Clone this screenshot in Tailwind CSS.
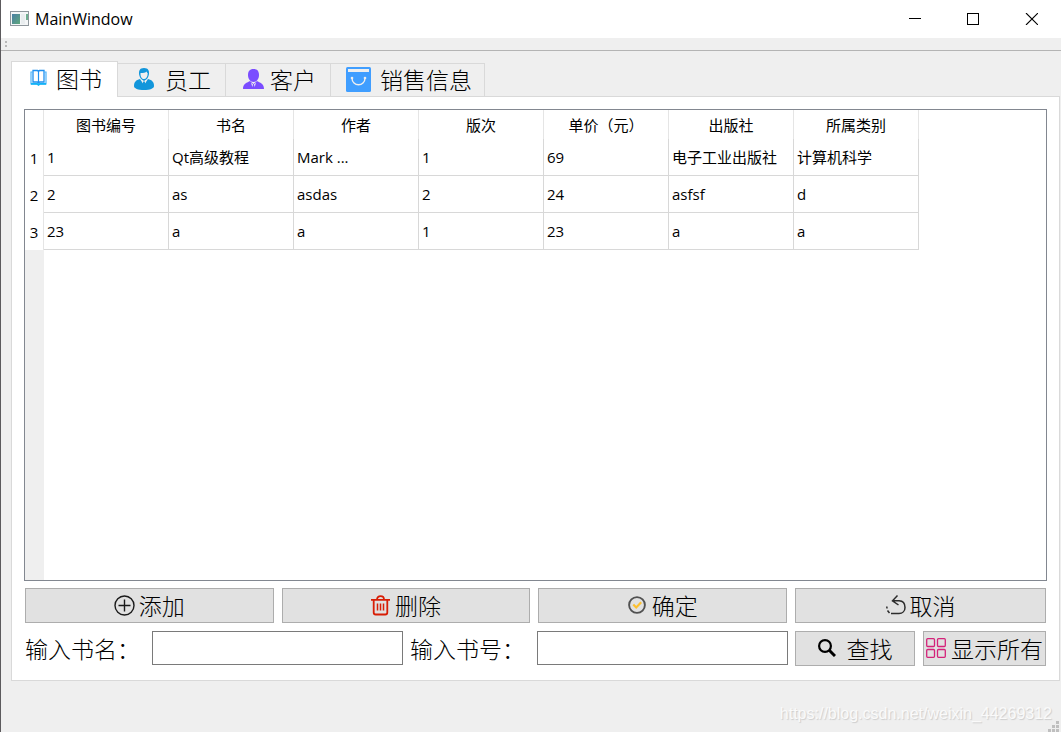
<!DOCTYPE html>
<html lang="zh-CN">
<head>
    <meta charset="UTF-8">
    <meta name="viewport" content="width=device-width, initial-scale=1.0">
    <title>MainWindow</title>
    <script src="https://cdn.jsdelivr.net/npm/@tailwindcss/browser@4"></script>
</head>
<body class="h-screen flex flex-col bg-[#efefef] border-l border-[#5c5a5d] text-black font-['Open_Sans','Noto_Sans_CJK_SC',sans-serif] overflow-hidden">
    <!-- Title bar -->
    <header class="flex items-center h-[38px] shrink-0 bg-white pl-[9px] pb-px">
        <svg class="w-5 h-4" viewBox="0 0 20 16">
            <defs>
                <linearGradient id="app" x1="0" y1="0" x2="1" y2="1">
                    <stop offset="0" stop-color="#4a7fa5"/>
                    <stop offset="1" stop-color="#5fa87c"/>
                </linearGradient>
            </defs>
            <rect x="0.5" y="0.5" width="18" height="14" fill="#f4f6f7" stroke="#8f979d"/>
            <rect x="2" y="3" width="8" height="10" fill="url(#app)"/>
            <rect x="11" y="3" width="4" height="10" fill="#e9edef"/>
            <rect x="16" y="3" width="2" height="6" fill="#6fae90"/>
        </svg>
        <h1 class="ml-[5px] text-base leading-6">MainWindow</h1>
        <div class="ml-auto flex">
            <button class="w-[58px] h-9 flex items-center justify-center" aria-label="Minimize">
                <svg class="w-3 h-3" viewBox="0 0 12 12" shape-rendering="crispEdges"><path d="M0 5.5h12" stroke="#000"/></svg>
            </button>
            <button class="w-[58px] h-9 flex items-center justify-center" aria-label="Maximize">
                <svg class="w-3 h-3" viewBox="0 0 12 12" shape-rendering="crispEdges"><rect x="0.5" y="0.5" width="11" height="11" fill="none" stroke="#000"/></svg>
            </button>
            <button class="w-[59px] h-9 flex items-center justify-center" aria-label="Close">
                <svg class="w-[13px] h-3" viewBox="0 0 13 12"><path d="M1 0l12 12M13 0L1 12" stroke="#000" stroke-width="1.1"/></svg>
            </button>
        </div>
    </header>

    <!-- Empty toolbar with drag handle -->
    <div class="h-[13px] shrink-0 border-b border-[#b4b4b4] pl-1 pt-[3px]">
        <svg class="w-1 h-2" viewBox="0 0 4 8"><path d="M0 0h2v2h-2zM0 4h2v2h-2z" fill="#b8b8b8"/></svg>
    </div>

    <main class="flex-1 min-h-0 flex flex-col pl-[10px] pr-px pt-[10px]">
        <nav class="relative z-10 flex items-end h-9 -mb-px text-[23px] leading-8 font-light font-['Noto_Sans_CJK_SC',sans-serif]" role="tablist">
            <button role="tab" aria-selected="true" class="flex items-center w-[107px] h-9 pl-[18px] pb-1 bg-white border border-b-0 border-[#d9d9d9] font-light">
                <svg class="w-[17px] h-[17px] mr-[9px]" viewBox="0 0 17 17" fill="none">
                    <path d="M3 1.500H7.500L8.500 2.500L9.500 1.500H14V13H9.500L8.500 14L7.500 13H3Z" stroke="#1e90f0" stroke-width="1.300"/>
                    <path d="M8.500 2.500V14" stroke="#1e90f0" stroke-width="1.200"/>
                    <path d="M3 3H1V15H16V3H14" stroke="#4db4fa" stroke-width="1.200"/>
                    <path d="M1 14.800H7L8.500 15.800L10 14.800H16" stroke="#10b4f6" stroke-width="1.800"/>
                </svg>
                图书
            </button>
            <button role="tab" aria-selected="false" class="flex items-center w-[108px] h-[34px] pl-4 pb-0.5 border border-l-0 border-[#d9d9d9] font-light">
                <svg class="w-5 h-[22px] mr-[11px]" viewBox="0 0 20 22">
                    <path d="M10 0C5.500 0 4.800 3 5 6C5.400 9 7 11 8 12L10 14L12 12C13 11 14.600 9 15 6C15.200 3 14.500 0 10 0Z" fill="#1296db"/>
                    <path d="M6.500 5C9 5 12 4.500 12.500 3.500C13 4.500 13.500 5 13.700 5C13.700 9 12 11 10 11C8 11 6.300 9 6.500 5Z" fill="#efefef"/>
                    <path d="M6 11C2 12 0 14 0 18C0 20.500 4 22 10 22C16 22 20 20.500 20 18C20 14 18 12 14 11L10 17Z" fill="#1296db"/>
                    <path d="M7 11L10 17L13 11L10 13Z" fill="#efefef"/>
                    <path d="M9.200 13.500h1.600l.6 3L10 18L8.600 16.500Z" fill="#1296db"/>
                </svg>
                员工
            </button>
            <button role="tab" aria-selected="false" class="flex items-center w-[105px] h-[34px] pl-[17px] pb-0.5 border border-l-0 border-[#d9d9d9] font-light">
                <svg class="w-[21px] h-5 mr-[6px]" viewBox="0 0 21 20" fill="#7b4dff">
                    <path d="M10.500 0C6.500 0 5 2.500 5 6C5 9.500 7 13 10.500 13C14 13 16 9.500 16 6C16 2.500 14.500 0 10.500 0Z"/>
                    <path d="M7 12C3 14 0 15 0 20H21C21 15 18 14 14 12L10.500 15Z"/>
                    <path d="M8 13.500L9.300 18L10 15.500L8.800 14.300ZM13 13.500L11.700 18L11 15.500L12.200 14.300Z" fill="#efefef"/>
                </svg>
                客户
            </button>
            <button role="tab" aria-selected="false" class="flex items-center w-[154px] h-[34px] pl-[15px] pb-0.5 border border-l-0 border-[#d9d9d9] font-light">
                <svg class="w-[25px] h-[25px] mr-[9px] shrink-0" viewBox="0 0 25 25">
                    <rect width="25" height="25" rx="1.500" fill="#409eff"/>
                    <path d="M2 2H23V5H2Z" fill="#efefef"/>
                    <path d="M6 11C6 20 19 20 19 11" fill="none" stroke="#efefef" stroke-width="1.400"/>
                    <circle cx="6" cy="11" r="1.300" fill="#efefef"/>
                    <circle cx="19" cy="11" r="1.300" fill="#efefef"/>
                </svg>
                销售信息
            </button>
        </nav>

        <section class="flex-1 min-h-0 flex flex-col bg-white border border-[#d9d9d9] px-3 pt-3 pb-[14px]">
            <div class="flex-1 min-h-0 flex flex-col border border-[#828790]">
                <table class="table-fixed w-[894px] border-separate border-spacing-0 text-[15px] leading-5 text-left">
                    <colgroup>
                        <col class="w-[19px]">
                        <col span="7">
                    </colgroup>
                    <thead>
                        <tr class="h-[29px] *:p-0 *:pt-px *:font-normal *:text-center *:border-r *:border-[#e5e5e5]">
                            <th></th>
                            <th scope="col">图书编号</th>
                            <th scope="col">书名</th>
                            <th scope="col">作者</th>
                            <th scope="col">版次</th>
                            <th scope="col">单价（元）</th>
                            <th scope="col">出版社</th>
                            <th scope="col">所属类别</th>
                        </tr>
                    </thead>
                    <tbody class="[&_td]:border-r [&_td]:border-b [&_td]:border-[#d8d8d8] [&_td]:px-[3px] [&_td]:py-0 [&_th]:p-0 [&_th]:font-normal [&_th]:text-center [&_th]:border-r [&_th]:border-[#e5e5e5]">
                        <tr class="h-[37px]">
                            <th scope="row">1</th>
                            <td>1</td>
                            <td>Qt高级教程</td>
                            <td>Mark ...</td>
                            <td>1</td>
                            <td>69</td>
                            <td>电子工业出版社</td>
                            <td>计算机科学</td>
                        </tr>
                        <tr class="h-[37px]">
                            <th scope="row">2</th>
                            <td>2</td>
                            <td>as</td>
                            <td>asdas</td>
                            <td>2</td>
                            <td>24</td>
                            <td>asfsf</td>
                            <td>d</td>
                        </tr>
                        <tr class="h-[37px]">
                            <th scope="row">3</th>
                            <td>23</td>
                            <td>a</td>
                            <td>a</td>
                            <td>1</td>
                            <td>23</td>
                            <td>a</td>
                            <td>a</td>
                        </tr>
                    </tbody>
                </table>
                <div class="flex-1 w-[19px] bg-[#efefef]"></div>
            </div>

            <div class="mt-[7px] px-px grid grid-cols-[1fr_1fr_1fr_251px] gap-2 text-[23px] leading-8 font-['Noto_Sans_CJK_SC',sans-serif]">
                <button class="h-[35px] flex items-center justify-center gap-1 pb-px bg-[#e1e1e1] border border-[#adadad] font-light">
                    <svg class="w-[21px] h-[21px]" viewBox="0 0 21 21" fill="none" stroke="#1a1a1a" stroke-width="1.400">
                        <circle cx="10.500" cy="10.500" r="9.500"/>
                        <path d="M10.500 4.500V16.500M4.500 10.500H16.500"/>
                    </svg>
                    添加
                </button>
                <button class="h-[35px] flex items-center justify-center gap-[5px] pb-px bg-[#e1e1e1] border border-[#adadad] font-light">
                    <svg class="w-[19px] h-[21px]" viewBox="0 0 19 21" fill="none" stroke="#d81e06" stroke-width="1.800">
                        <path d="M0 4.800H19M6 4.500C6 0 13 0 13 4.500M2.700 5V17.500Q2.700 19.500 4.700 19.500H14.300Q16.300 19.500 16.300 17.500V5"/>
                        <path d="M6.500 8.500V15.500M9.500 8.500V15.500M12.500 8.500V15.500" stroke-width="1.500"/>
                    </svg>
                    删除
                </button>
                <button class="h-[35px] flex items-center justify-center gap-1.5 pb-px bg-[#e1e1e1] border border-[#adadad] font-light">
                    <svg class="w-[18px] h-[18px]" viewBox="0 0 18 18" fill="none">
                        <circle cx="9" cy="9" r="7.900" stroke="#515151" stroke-width="1.900"/>
                        <path d="M5.300 8.500L8.200 11.500L13.200 6.300" stroke="#fdc02f" stroke-width="2.200"/>
                    </svg>
                    确定
                </button>
                <button class="h-[35px] flex items-center justify-center gap-1 pb-px bg-[#e1e1e1] border border-[#adadad] font-light">
                    <svg class="w-5 h-5" viewBox="0 0 20 20" fill="none" stroke="#2c2c2c" stroke-width="1.500">
                        <path d="M11.500 0.500L6.500 5.800L12.500 10M6.500 5.800H13C17 6 19 9 19 12.500C19 16 16.500 18.500 13 18.500H5"/>
                        <path d="M3.500 18L1.500 15.500M1 13.500L0.800 11.500"/>
                    </svg>
                    取消
                </button>
            </div>

            <form class="mt-2 px-px flex gap-[7px] text-[23px] leading-[34px] font-light font-['Noto_Sans_CJK_SC',sans-serif]">
                <label for="book-name" class="w-[120px] shrink-0 whitespace-nowrap">输入书名：</label>
                <input id="book-name" type="text" class="flex-1 min-w-0 h-[34px] px-1 bg-white border border-[#7a7a7a] outline-none">
                <label for="book-id" class="w-[120px] shrink-0 whitespace-nowrap">输入书号：</label>
                <input id="book-id" type="text" class="flex-1 min-w-0 h-[34px] px-1 bg-white border border-[#7a7a7a] outline-none">
                <button type="button" class="w-[120px] h-[35px] shrink-0 flex items-center justify-center gap-[11px] pb-px bg-[#e1e1e1] border border-[#adadad] font-light">
                    <svg class="w-[18px] h-[18px]" viewBox="0 0 18 18" fill="none" stroke="#000">
                        <circle cx="7" cy="7" r="5.900" stroke-width="2.200"/>
                        <path d="M11 11L17 17" stroke-width="3"/>
                    </svg>
                    查找
                </button>
                <button type="button" class="w-[123px] h-[35px] ml-px shrink-0 flex items-center justify-center gap-[5px] pb-px whitespace-nowrap bg-[#e1e1e1] border border-[#adadad] font-light">
                    <svg class="w-5 h-5 shrink-0" viewBox="0 0 20 20" fill="none" stroke="#d4237a" stroke-width="1.300">
                        <rect x="0.700" y="0.700" width="7.800" height="7.800" rx="1"/>
                        <rect x="11.500" y="0.700" width="7.800" height="7.800" rx="1"/>
                        <rect x="0.700" y="11.500" width="7.800" height="7.800" rx="1"/>
                        <rect x="11.500" y="11.500" width="7.800" height="7.800" rx="1"/>
                    </svg>
                    显示所有
                </button>
            </form>
        </section>
    </main>

    <!-- Status bar -->
    <footer class="relative h-[51px] shrink-0 flex items-center justify-end pr-[9px] pt-[14px]">
        <span class="font-['Liberation_Sans',sans-serif] text-base leading-5 text-[#fafafa] [text-shadow:1px_1px_1px_#cdcdcd]">https://blog.csdn.net/weixin_44269312</span>
        <svg class="absolute right-0.5 bottom-0 w-[11px] h-[11px]" viewBox="0 0 11 11" fill="#bfbfbf" shape-rendering="crispEdges">
            <path d="M8 0h3v3h-3zM4 4h3v3h-3zM8 4h3v3h-3zM0 8h3v3h-3zM4 8h3v3h-3zM8 8h3v3h-3z"/>
        </svg>
    </footer>
</body>
</html>
